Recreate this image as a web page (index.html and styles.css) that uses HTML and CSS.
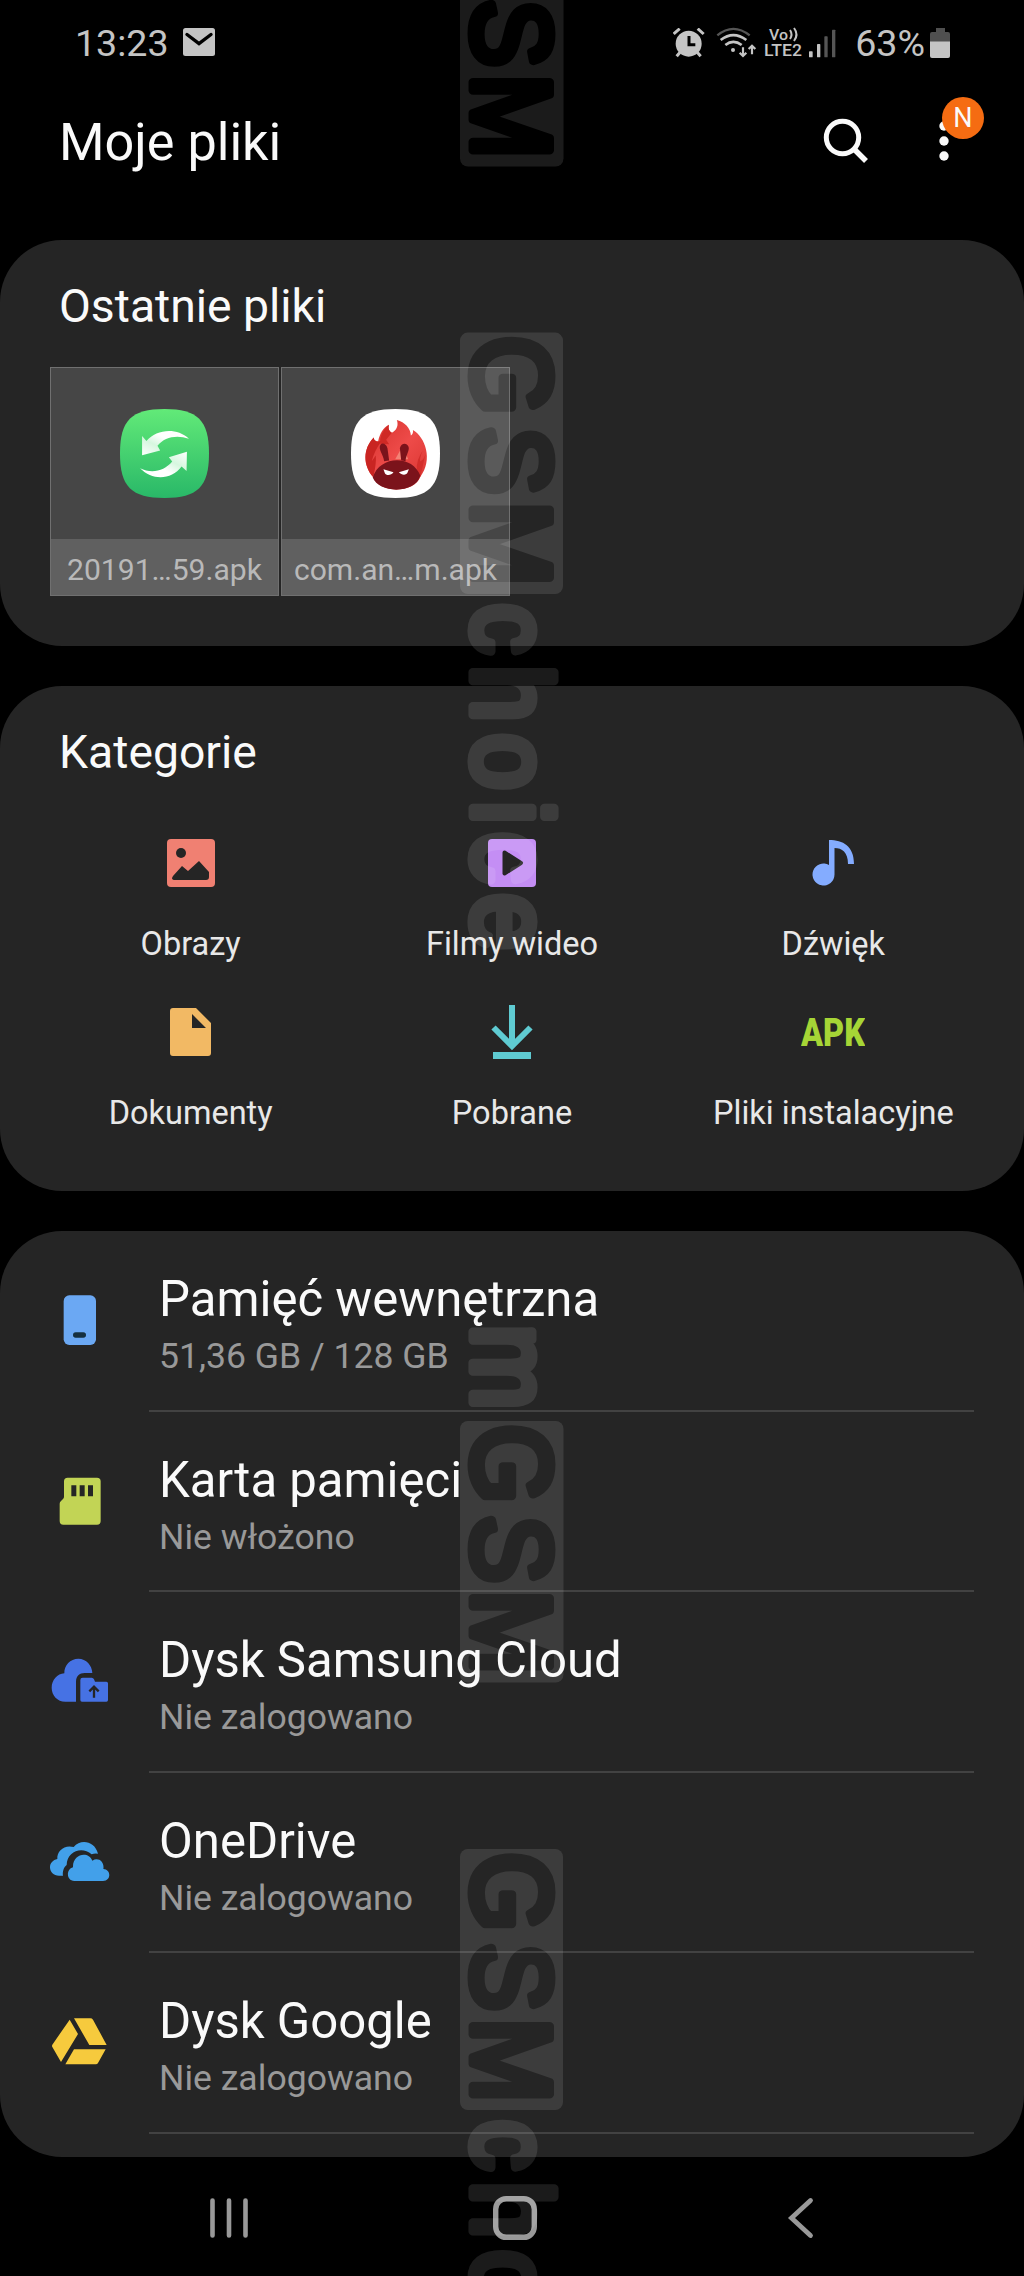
FILE: index.html
```html
<!DOCTYPE html>
<html lang="pl">
<head>
<meta charset="utf-8">
<title>Moje pliki</title>
<link rel="stylesheet" href="styles.css">
</head>
<body>
<div class="screen">
  <div class="status">
    <span class="clock">13:23</span>
    <svg class="mail" width="32" height="28" viewBox="0 0 32 28"><rect width="32" height="28" rx="2.5" fill="#c4c4c4"/><path d="M4 6.500 16 15.500 28 6.500" fill="none" stroke="#000" stroke-width="3.400" stroke-linecap="round"/></svg>
    <div class="status-right">
      <svg width="32" height="30" viewBox="40 36 96 90" fill="#c4c4c4" stroke="#c4c4c4"><circle cx="87" cy="83" r="39" stroke="none"/><path d="M42 54 60 38M114 38 132 54M62 108 51 121M112 108 123 121" stroke-width="9" fill="none"/><path d="M88 60V86H107" stroke="#000" stroke-width="9" fill="none"/></svg>
      <svg width="42" height="32" viewBox="168 33 126 96" fill="none" stroke="#c4c4c4" stroke-width="6"><path d="M172 58Q220 19 269 58" stroke="#555" stroke-width="7"/><path d="M182 72Q220 43 259 72M196 87Q220 68 245 87" stroke-width="8"/><circle cx="219" cy="102" r="6" fill="#c4c4c4" stroke="none"/><path d="M249 94V119M239 110 249 120 259 110M276 115V89M266 99 276 89 286 99" stroke-width="6.500"/></svg>
      <svg class="volte" width="42" height="32" viewBox="0 0 42 32" fill="#c4c4c4"><text x="6" y="13" font-size="15.500" textLength="19" lengthAdjust="spacingAndGlyphs">Vo</text><path d="M27 3Q30 7.500 27 12M31 1Q36 7.500 31 14" fill="none" stroke="#c4c4c4" stroke-width="2"/><text x="1" y="29" font-size="16.500" textLength="38" lengthAdjust="spacingAndGlyphs">LTE2</text></svg>
      <svg width="28" height="30" viewBox="444 36 84 90"><rect x="444" y="106" width="11" height="18" rx="2" fill="#c4c4c4"/><rect x="468" y="84" width="10" height="40" rx="2" fill="#c4c4c4"/><rect x="490" y="61" width="10" height="63" rx="2" fill="#555"/><rect x="513" y="41" width="10" height="83" rx="2" fill="#555"/></svg>
      <span class="percent">63%</span>
      <svg width="20" height="30" viewBox="0 0 20 30"><path d="M0 14V6Q0 4 2 4H6V0H15V4H18Q20 4 20 6V14Z" fill="#4f4f4f"/><path d="M0 13.500H20V28Q20 30 18 30H2Q0 30 0 28Z" fill="#c4c4c4"/></svg>
    </div>
  </div>

  <header class="header">
    <h1>Moje pliki</h1>
    <svg class="search" width="46" height="46" viewBox="0 0 46 46" fill="none" stroke="#fafafa"><circle cx="19.500" cy="19.500" r="16.200" stroke-width="5"/><path d="M31 31 43 43" stroke-width="5.500"/></svg>
    <div class="more">
      <svg width="12" height="42" viewBox="0 0 12 42" fill="#fafafa"><circle cx="6" cy="6" r="4.700"/><circle cx="6" cy="21" r="4.700"/><circle cx="6" cy="36" r="4.700"/></svg>
      <span class="badge">N</span>
    </div>
  </header>

  <section class="card recent">
    <h2>Ostatnie pliki</h2>
    <div class="thumbs">
      <div class="thumb">
        <div class="preview">
          <svg width="89" height="89" viewBox="30 27 266 266">
            <defs>
              <linearGradient id="green" x1="0" y1="0" x2="0" y2="1"><stop offset="0" stop-color="#62ea78"/><stop offset="1" stop-color="#29b868"/></linearGradient>
              <linearGradient id="arrowA" x1="0" y1="1" x2="1" y2="0"><stop offset="0" stop-color="#fff"/><stop offset=".35" stop-color="#d6f7df"/><stop offset=".6" stop-color="#fff"/></linearGradient>
              <linearGradient id="arrowB" x1="1" y1="0" x2="0" y2="1"><stop offset="0" stop-color="#fff"/><stop offset=".35" stop-color="#d6f7df"/><stop offset=".6" stop-color="#fff"/></linearGradient>
            </defs>
            <path d="M163 27C262 27 296 61 296 160S262 293 163 293 30 259 30 160 64 27 163 27Z" fill="url(#green)"/>
            <path d="M96 108 109 123C139 88 198 81 236 116C199 103 162 111 142 137L150 151 96 165Z" fill="url(#arrowA)"/>
            <path d="M230 155 229 212 214 199C184 239 127 242 90 204C125 222 163 212 186 184L176 171Z" fill="url(#arrowB)"/>
          </svg>
        </div>
        <div class="name">20191…59.apk</div>
      </div>
      <div class="thumb">
        <div class="preview">
          <svg width="89" height="89" viewBox="724 27 266 266">
            <defs><linearGradient id="flame" x1="0" y1="0" x2="1" y2="1"><stop offset="0" stop-color="#d5302b"/><stop offset=".5" stop-color="#ee4b49"/><stop offset="1" stop-color="#d8332f"/></linearGradient></defs>
            <path d="M857 27C956 27 990 61 990 160S956 293 857 293 724 259 724 160 758 27 857 27Z" fill="#fff"/>
            <path d="M790 230C760 196 759 146 792 112Q792 123 805 124C810 100 820 83 837 74Q834 92 846 98C860 91 867 77 861 60C885 66 902 85 903 106Q911 101 909 90C946 111 970 179 931 230C911 280 810 280 790 230Z" fill="url(#flame)"/>
            <path d="M790 230C760 196 759 146 792 112Q792 123 805 124L816 122Q794 151 786 183L798 166Q800 189 792 224Z" fill="#c92522"/>
            <path d="M837 74Q834 92 846 98L829 119 838 132 811 131Q809 99 837 74Z" fill="#cf2925"/>
            <path d="M945 142Q931 160 930 184Q942 180 947 161L931 230 922 213Q915 181 945 142Z" fill="#d32e2b"/>
            <path d="M878 138 856 177H895Z" fill="#f38275"/>
            <path d="M823 183C821 163 804 148 812 134C817 127 829 130 833 144L838 181ZM874 180 870 144C874 128 891 127 896 140C900 151 887 167 887 183ZM789 232C808 165 908 162 931 226C919 280 808 282 789 232Z" fill="#7b131b"/>
            <path d="M821 207 851 216C844 226 829 227 825 218ZM897 207 867 216C876 226 890 225 893 217Z" fill="#fff"/>
          </svg>
        </div>
        <div class="name">com.an…m.apk</div>
      </div>
    </div>
  </section>

  <section class="card categories">
    <h2>Kategorie</h2>
    <div class="grid">
      <div class="cat"><div class="icon"><svg width="48" height="48" viewBox="0 0 48 48"><rect width="48" height="48" rx="4" fill="#f08072"/><circle cx="14" cy="14" r="5" fill="#252525"/><path d="M6 37 15 27 21 32 32 22 42 33V38Q42 41 39 41H8Q5 41 5 39Z" fill="#252525"/></svg></div><span>Obrazy</span></div>
      <div class="cat"><div class="icon"><svg width="48" height="48" viewBox="0 0 48 48"><rect width="48" height="48" rx="4" fill="#c48ef4"/><path d="M16.500 13.500 33 24 16.500 34.500Z" fill="#252525" stroke="#252525" stroke-width="4" stroke-linejoin="round"/></svg></div><span>Filmy wideo</span></div>
      <div class="cat"><div class="icon"><svg width="42" height="46" viewBox="0 0 42 46"><path d="M17 0C31 0 42 6 42 24H36C36 12 30 8 22.500 8V34.500A11 11 0 1 1 17 25Z" fill="#84acff"/></svg></div><span>Dźwięk</span></div>
      <div class="cat"><div class="icon"><svg width="41" height="48" viewBox="0 0 41 48"><path d="M3 0H26L41 15V45Q41 48 38 48H3Q0 48 0 45V3Q0 0 3 0ZM22 6V20H36Z" fill="#f2b964" fill-rule="evenodd"/></svg></div><span>Dokumenty</span></div>
      <div class="cat"><div class="icon"><svg width="42" height="54" viewBox="0 0 42 54" fill="none" stroke="#5fcbd2"><path d="M21 0V42M2.500 22.500 21 41 39.500 22.500" stroke-width="6"/><path d="M2 50.500H40" stroke-width="7"/></svg></div><span>Pobrane</span></div>
      <div class="cat"><div class="icon"><svg class="apk" width="64" height="28" viewBox="0 0 64 28"><text x="0" y="27.500" textLength="64" lengthAdjust="spacingAndGlyphs">APK</text></svg></div><span>Pliki instalacyjne</span></div>
    </div>
  </section>

  <section class="card storage">
    <div class="row">
      <div class="lead"><svg width="60" height="60" viewBox="150 210 180 180"><rect x="191" y="226" width="97" height="149" rx="17" fill="#6ba8f3"/><rect x="219" y="337" width="39" height="16" rx="8" fill="#16303f"/></svg></div>
      <div class="body"><div class="title">Pamięć wewnętrzna</div><div class="sub">51,36 GB / 128 GB</div></div>
    </div>
    <div class="row">
      <div class="lead"><svg width="60" height="60" viewBox="150 752 180 180"><path d="M203 772H291Q302 772 302 783V902Q302 913 291 913H190Q179 913 179 902V850Q179 846 183 842L189 836Q192 833 192 829V783Q192 772 203 772Z" fill="#c2d455"/><path d="M214 795H229V828H214ZM239 795H254V828H239ZM264 795H279V828H264Z" fill="#252525"/></svg></div>
      <div class="body"><div class="title">Karta pamięci</div><div class="sub">Nie włożono</div></div>
    </div>
    <div class="row">
      <div class="lead"><svg width="60" height="60" viewBox="150 1294 180 180" fill="#4672e4"><path d="M228 1446H196C172 1446 155 1427 155 1404C155 1381 172 1362 193 1361C192 1337 211 1317 235 1317C259 1317 276 1337 277 1360H254C238 1360 228 1369 228 1386Z"/><path d="M248 1374H275Q280 1374 282 1379L285 1386H319Q324 1386 324 1391V1441Q324 1446 319 1446H246Q241 1446 241 1441V1381Q241 1374 248 1374Z"/><path d="M282 1434V1403M268 1415 282 1401 296 1415" fill="none" stroke="#252525" stroke-width="7"/></svg></div>
      <div class="body"><div class="title">Dysk Samsung Cloud</div><div class="sub">Nie zalogowano</div></div>
    </div>
    <div class="row">
      <div class="lead"><svg width="60" height="60" viewBox="150 396 180 180" fill="#42a0ea"><path d="M189 527H177C161 527 150 516 150 502C150 489 159 480 172 477C170 452 194 433 221 441C242 415 285 423 294 461Q284 459 275 463C244 437 201 456 200 495C191 502 187 515 189 527Z"/><path d="M223 543C198 543 198 507 219 502C217 462 265 452 277 482C296 470 314 487 310 507C333 507 335 543 309 543Z"/></svg></div>
      <div class="body"><div class="title">OneDrive</div><div class="sub">Nie zalogowano</div></div>
    </div>
    <div class="row">
      <div class="lead"><svg width="60" height="60" viewBox="150 938 180 180" fill="#f6ca3d"><path d="M209 961 234 1004 183 1088 157 1043Q155 1040 157 1036ZM222 957H271Q276 957 279 961L320 1037H268ZM222 1050H317L294 1091Q292 1095 287 1095H196Z"/></svg></div>
      <div class="body"><div class="title">Dysk Google</div><div class="sub">Nie zalogowano</div></div>
    </div>
  </section>

  <nav class="nav">
    <svg width="44" height="44" viewBox="0 0 44 44" stroke="#999" stroke-width="4.600" stroke-linecap="round"><path d="M5.500 4.500V39.500M22 4.500V39.500M38.500 4.500V39.500"/></svg>
    <svg width="44" height="44" viewBox="0 0 44 44" fill="none" stroke="#999" stroke-width="5.400"><rect x="2.700" y="2.700" width="38.600" height="38.600" rx="10.500"/></svg>
    <svg width="44" height="44" viewBox="0 0 44 44" fill="none" stroke="#999" stroke-width="4.800" stroke-linecap="round"><path d="M31.500 4.500 12.500 22 31.500 39.500"/></svg>
  </nav>

  <svg class="watermark" width="124" height="2276" viewBox="450 0 124 2276">
    <defs>
      <g id="gsm" transform="rotate(90) scale(.92 1)"><text x="3.400 102.400 183.400">GSM</text></g>
      <g id="choice" transform="rotate(90) scale(.92 1)"><text x="294.100 361.200 435.600 509 542.700 609.500">choice</text></g>
      <mask id="cut" maskUnits="userSpaceOnUse" x="450" y="-100" width="124" height="2476">
        <rect x="450" y="-100" width="124" height="2476" fill="#fff"/>
        <g fill="#000" stroke="#000"><use href="#gsm" transform="translate(473 -95)"/><use href="#gsm" transform="translate(473 332.600)"/><use href="#gsm" transform="translate(473 1421)"/><use href="#gsm" transform="translate(473 1849)"/></g>
      </mask>
    </defs>
    <g class="ink">
      <g mask="url(#cut)"><rect x="460" y="-95" width="103.500" height="261.500" rx="8"/><rect x="460" y="332.600" width="103" height="261.500" rx="8"/><rect x="460" y="1421" width="103.500" height="261.500" rx="8"/><rect x="460" y="1849" width="103" height="261" rx="8"/></g>
      <g fill="#fff" stroke="#fff"><use href="#choice" transform="translate(473 332.600)"/><use href="#choice" transform="translate(473 1849)"/><text x="-104.800" transform="translate(473 1421) rotate(90) scale(.92 1)">m</text></g>
    </g>
  </svg>
</div>
</body>
</html>
```
FILE: styles.css
```css
* { box-sizing: border-box; }
body { margin: 0; background: #000; font-family: Roboto, "Liberation Sans", sans-serif; color: #fafafa; }
svg { display: block; flex: none; }
h1, h2 { margin: 0; font-weight: 400; white-space: nowrap; }

.screen { position: relative; width: 1024px; height: 2276px; overflow: hidden; display: flex; flex-direction: column; }

.status { height: 86px; flex: none; display: flex; align-items: center; padding: 0 74px 0 75px; color: #c4c4c4; font-size: 37.6px; line-height: 86px; }
.mail { margin-left: 14px; margin-bottom: 2px; }
.status-right { margin-left: auto; display: flex; align-items: center; }
.status-right svg { margin-bottom: 1px; }
.status-right svg:first-child { margin-right: 11px; }
.volte { margin: 0 4px 0 5px; font-weight: 500; }
.percent { margin: 0 5px 0 18px; }

.header { height: 114px; flex: none; margin-bottom: 40px; display: flex; align-items: center; padding-left: 59px; }
h1 { font-size: 52.2px; line-height: 114px; }
.search { margin: 0 0 5px auto; }
.more { position: relative; margin: 0 74px 5px 69px; }
.badge { position: absolute; left: 4px; top: -23px; width: 42px; height: 42px; border-radius: 50%; background: #f56c12; font-size: 27px; line-height: 43px; text-align: center; }

.card { background: #252525; border-radius: 62px; flex: none; }
h2 { font-size: 46.3px; line-height: 60px; padding-left: 59px; }

.recent { height: 405.5px; padding-top: 36px; margin-bottom: 40px; }
.thumbs { display: flex; gap: 2px; padding-left: 50px; margin-top: 31px; }
.thumb { width: 229px; height: 229px; background: #464646; border: 1px solid #707070; display: flex; flex-direction: column; }
.preview { flex: 1; display: flex; justify-content: center; align-items: center; }
.name { height: 56px; background: #606060; color: #b9b9b9; font-size: 30.1px; line-height: 61px; text-align: center; white-space: nowrap; }

.categories { height: 505.5px; padding-top: 36px; margin-bottom: 40px; }
.grid { display: grid; grid-template-columns: repeat(3, 1fr); row-gap: 30.3px; padding: 0 30px; margin-top: 45px; }
.cat { display: flex; flex-direction: column; align-items: center; gap: 23px; font-size: 32.5px; line-height: 44px; color: #e8e8e8; white-space: nowrap; }
.icon { height: 72px; display: flex; align-items: center; }
.apk { font-size: 38px; font-weight: 900; fill: #a6d536; }

.storage { height: 925.5px; padding-bottom: 22px; overflow: hidden; }
.row { display: flex; height: 180.6px; }
.lead { width: 149px; padding: 59px 0 0 50px; }
.body { flex: 1; margin-right: 50px; padding: 38px 0 0 10px; border-bottom: 2px solid #424242; white-space: nowrap; }
.title { font-size: 49.1px; line-height: 60px; }
.sub { font-size: 35.6px; line-height: 44px; margin-top: 5px; color: #999; }

.nav { flex: 1; display: grid; grid-template-columns: repeat(3, 1fr); justify-items: center; padding: 39px 80px 0 86px; }

.watermark { position: absolute; left: 450px; top: 0; pointer-events: none; font-family: "Liberation Sans", Arial, sans-serif; font-size: 111px; stroke-width: 9px; stroke-linejoin: round; }
.ink { opacity: .105; fill: #fff; }
```
